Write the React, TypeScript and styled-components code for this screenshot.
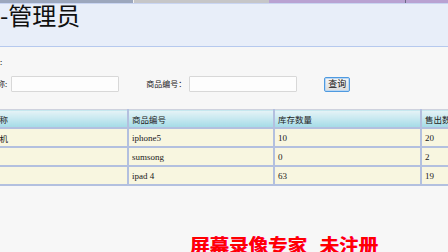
import React from "react";
import styled, { createGlobalStyle } from "styled-components";

const GlobalStyle = createGlobalStyle`
  html, body {
    margin: 0;
    padding: 0;
    background: #f7f7f7;
    overflow: hidden;
    width: 448px;
    height: 252px;
  }
  body {
    font-family: "Noto Sans CJK SC", "Noto Sans", sans-serif;
    color: #111;
  }
`;

const Page = styled.div`
  position: relative;
  width: 448px;
  height: 252px;
  overflow: hidden;
`;

const TopStrip = styled.div`
  display: flex;
  height: 3px;
`;

const StripSeg = styled.div<{ $w: number; $c: string; $edge?: string }>`
  flex: 0 0 ${(p) => p.$w}px;
  background: ${(p) => p.$c};
  border-right: ${(p) => (p.$edge ? `1px solid ${p.$edge}` : "none")};
`;

const Header = styled.div`
  height: 42px;
  background: #e8eef9;
  border-top: 1px solid #c9d5f2;
  border-bottom: 1px solid #b6c9ee;
  display: flex;
  align-items: flex-start;
`;

const Title = styled.h1`
  margin: 0;
  font-size: 24px;
  line-height: 22px;
  font-weight: 400;
  color: #101010;
  font-family: "Noto Sans CJK SC", sans-serif;
`;

const Content = styled.div`
  padding-top: 9px;
  display: flex;
  flex-direction: column;
`;

const Caption = styled.div`
  margin-left: -32px;
  font-size: 8px;
  line-height: 12px;
  height: 12px;
  white-space: nowrap;
`;

const FormRow = styled.div`
  margin-top: 8px;
  margin-left: -27px;
  display: flex;
  align-items: center;
  height: 16px;
`;

const Label = styled.span<{ $gapLeft?: number; $gapRight: number }>`
  font-size: 8px;
  line-height: 12px;
  white-space: nowrap;
  color: #222;
  margin-left: ${(p) => p.$gapLeft ?? 0}px;
  margin-right: ${(p) => p.$gapRight}px;
`;

const TextInput = styled.input`
  box-sizing: border-box;
  width: 108px;
  height: 16px;
  border: 1px solid #d8d8d8;
  border-radius: 1px;
  background: #fdfdfd;
  padding: 0;
  margin: 0;
  outline: none;
`;

const QueryButton = styled.button`
  box-sizing: border-box;
  margin-left: 27px;
  width: 26px;
  height: 15px;
  padding: 0;
  border: 1px solid #4f9ae0;
  border-radius: 2px;
  background: linear-gradient(#f6f6f6, #dcdcdc);
  box-shadow: inset 0 0 0 1px #b9d7f3;
  font-family: "Noto Sans CJK SC", sans-serif;
  font-size: 9px;
  line-height: 12px;
  color: #111;
`;

const Table = styled.table`
  margin-top: 17px;
  margin-left: -31px;
  border-collapse: collapse;
  table-layout: fixed;
  width: 598px;
`;

const Col = styled.col<{ $w: number }>`
  width: ${(p) => p.$w}px;
`;

const HeadCell = styled.th`
  height: 17px;
  padding: 0 0 0 3px;
  text-align: left;
  font-weight: 400;
  font-size: 8.5px;
  color: #222;
  white-space: nowrap;
  overflow: hidden;
  background: linear-gradient(#e6f3f6 0%, #c9e9f0 45%, #a3dbe6 100%);
  border: 2px solid #b3c0df;
  border-top: 1px solid #cfd2de;
`;

const Cell = styled.td`
  height: 17px;
  padding: 0 0 0 3px;
  font-family: "Liberation Serif", serif;
  font-size: 9px;
  color: #1a1a1a;
  white-space: nowrap;
  overflow: hidden;
  background: #f8f6e0;
  border: 2px solid #b3c0df;
`;

const CnCell = styled(Cell)`
  font-family: "Noto Sans CJK SC", sans-serif;
  font-size: 8.5px;
`;

const Watermark = styled.div`
  position: absolute;
  left: 190px;
  top: 234px;
  font-family: "Noto Sans CJK SC", sans-serif;
  font-weight: 700;
  font-size: 19.5px;
  line-height: 22px;
  color: #ff0000;
  white-space: nowrap;
  word-spacing: 8px;
  text-shadow: 0.5px 0 0 #ff00aa;
`;

const rows = [
  { name: "苹果手机", code: "iphone5", stock: "10", sold: "20" },
  { name: "", code: "sumsong", stock: "0", sold: "2" },
  { name: "", code: "ipad 4", stock: "63", sold: "19" },
];

export default function App() {
  return (
    <Page>
      <GlobalStyle />
      <TopStrip>
        <StripSeg $w={133} $c="#9ca7bd" $edge="#f0f0f0" />
        <StripSeg $w={135} $c="#c6c6c8" />
        <StripSeg $w={136} $c="#b9a2d2" $edge="#6d6a86" />
        <StripSeg $w={44} $c="#b9a2d2" />
      </TopStrip>
      <Header>
        <Title>-管理员</Title>
      </Header>
      <Content>
        <Caption>查询条件:</Caption>
        <FormRow>
          <Label $gapRight={4}>商品名称:</Label>
          <TextInput />
          <Label $gapLeft={27} $gapRight={3}>商品编号：</Label>
          <TextInput />
          <QueryButton>查询</QueryButton>
        </FormRow>
        <Table>
          <colgroup>
            <Col $w={158} />
            <Col $w={146} />
            <Col $w={147} />
            <Col $w={147} />
          </colgroup>
          <thead>
            <tr>
              <HeadCell>商品名称</HeadCell>
              <HeadCell>商品编号</HeadCell>
              <HeadCell>库存数量</HeadCell>
              <HeadCell>售出数量</HeadCell>
            </tr>
          </thead>
          <tbody>
            {rows.map((r) => (
              <tr key={r.code}>
                <CnCell>{r.name}</CnCell>
                <Cell>{r.code}</Cell>
                <Cell>{r.stock}</Cell>
                <Cell>{r.sold}</Cell>
              </tr>
            ))}
          </tbody>
        </Table>
      </Content>
      <Watermark>屏幕录像专家 未注册</Watermark>
    </Page>
  );
}
